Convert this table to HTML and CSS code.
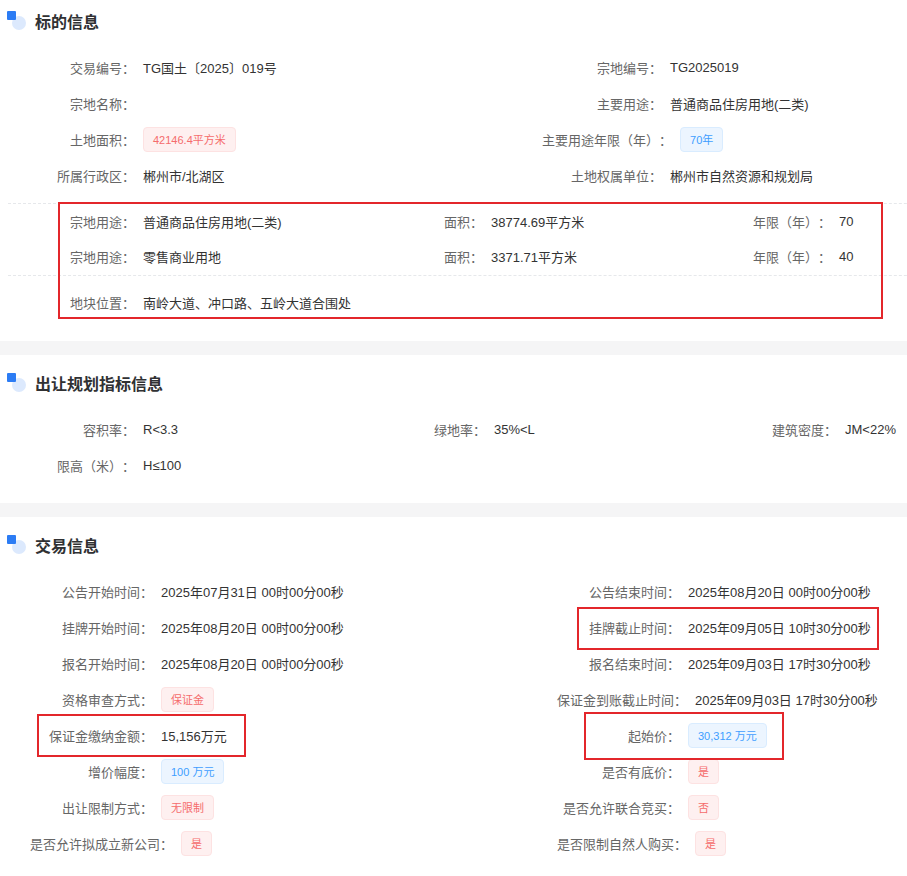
FILE: index.html
```html
<!DOCTYPE html>
<html lang="zh-CN">
<head>
  <meta charset="UTF-8" />
  <meta name="viewport" content="width=device-width, initial-scale=1.0"/>
  <title>宗地详情</title>
  <link rel="stylesheet" href="styles.css">
</head>
<body>

  <div class="page">

    <section class="section">
      <h3 class="section-title">
        <svg class="title-icon" width="20" height="20" viewBox="0 0 20 20"><circle cx="12" cy="12" r="7" fill="#dce9fd"/><rect x="0" y="0" width="9" height="9" rx="1" fill="#2c7cf4"/></svg>
        标的信息
      </h3>
      <div class="grid grid-2">
        <div class="item"><span class="label">交易编号：</span><span class="value">TG国土〔2025〕019号</span></div>
        <div class="item"><span class="label">宗地编号：</span><span class="value">TG2025019</span></div>
        <div class="item"><span class="label">宗地名称：</span><span class="value"></span></div>
        <div class="item"><span class="label">主要用途：</span><span class="value">普通商品住房用地(二类)</span></div>
        <div class="item"><span class="label">土地面积：</span><span class="tag tag-red">42146.4平方米</span></div>
        <div class="item"><span class="label">主要用途年限（年）：</span><span class="tag tag-blue">70年</span></div>
        <div class="item"><span class="label">所属行政区：</span><span class="value">郴州市/北湖区</span></div>
        <div class="item"><span class="label">土地权属单位：</span><span class="value">郴州市自然资源和规划局</span></div>
      </div>

      <div class="land">
        <div class="grid grid-land">
          <div class="item"><span class="label">宗地用途：</span><span class="value">普通商品住房用地(二类)</span></div>
          <div class="item"><span class="label">面积：</span><span class="value">38774.69平方米</span></div>
          <div class="item"><span class="label">年限（年）：</span><span class="value">70</span></div>
          <div class="item"><span class="label">宗地用途：</span><span class="value">零售商业用地</span></div>
          <div class="item"><span class="label">面积：</span><span class="value">3371.71平方米</span></div>
          <div class="item"><span class="label">年限（年）：</span><span class="value">40</span></div>
        </div>
        <div class="land-loc">
          <div class="item"><span class="label">地块位置：</span><span class="value">南岭大道、冲口路、五岭大道合围处</span></div>
        </div>
      </div>
    </section>

    <div class="band"></div>

    <section class="section">
      <h3 class="section-title">
        <svg class="title-icon" width="20" height="20" viewBox="0 0 20 20"><circle cx="12" cy="12" r="7" fill="#dce9fd"/><rect x="0" y="0" width="9" height="9" rx="1" fill="#2c7cf4"/></svg>
        出让规划指标信息
      </h3>
      <div class="grid grid-3">
        <div class="item"><span class="label">容积率：</span><span class="value">R&lt;3.3</span></div>
        <div class="item"><span class="label">绿地率：</span><span class="value">35%&lt;L</span></div>
        <div class="item"><span class="label">建筑密度：</span><span class="value">JM&lt;22%</span></div>
        <div class="item"><span class="label">限高（米）：</span><span class="value">H≤100</span></div>
      </div>
    </section>

    <div class="band"></div>

    <section class="section trade">
      <h3 class="section-title">
        <svg class="title-icon" width="20" height="20" viewBox="0 0 20 20"><circle cx="12" cy="12" r="7" fill="#dce9fd"/><rect x="0" y="0" width="9" height="9" rx="1" fill="#2c7cf4"/></svg>
        交易信息
      </h3>
      <div class="grid grid-2">
        <div class="item"><span class="label">公告开始时间：</span><span class="value">2025年07月31日 00时00分00秒</span></div>
        <div class="item"><span class="label">公告结束时间：</span><span class="value">2025年08月20日 00时00分00秒</span></div>
        <div class="item"><span class="label">挂牌开始时间：</span><span class="value">2025年08月20日 00时00分00秒</span></div>
        <div class="item"><span class="label">挂牌截止时间：</span><span class="value">2025年09月05日 10时30分00秒</span></div>
        <div class="item"><span class="label">报名开始时间：</span><span class="value">2025年08月20日 00时00分00秒</span></div>
        <div class="item"><span class="label">报名结束时间：</span><span class="value">2025年09月03日 17时30分00秒</span></div>
        <div class="item"><span class="label">资格审查方式：</span><span class="tag tag-red">保证金</span></div>
        <div class="item"><span class="label">保证金到账截止时间：</span><span class="value">2025年09月03日 17时30分00秒</span></div>
        <div class="item"><span class="label">保证金缴纳金额：</span><span class="value">15,156万元</span></div>
        <div class="item"><span class="label">起始价：</span><span class="tag tag-blue">30,312 万元</span></div>
        <div class="item"><span class="label">增价幅度：</span><span class="tag tag-blue">100 万元</span></div>
        <div class="item"><span class="label">是否有底价：</span><span class="tag tag-red">是</span></div>
        <div class="item"><span class="label">出让限制方式：</span><span class="tag tag-red">无限制</span></div>
        <div class="item"><span class="label">是否允许联合竞买：</span><span class="tag tag-red">否</span></div>
        <div class="item"><span class="label">是否允许拟成立新公司：</span><span class="tag tag-red">是</span></div>
        <div class="item"><span class="label">是否限制自然人购买：</span><span class="tag tag-red">是</span></div>
      </div>
    </section>

    <!-- red annotation frames drawn over the page -->
    <div class="mark mark-land"></div>
    <div class="mark mark-deadline"></div>
    <div class="mark mark-deposit"></div>
    <div class="mark mark-price"></div>

  </div>

</body>
</html>
```

FILE: styles.css
```css
* {
  margin: 0;
  box-sizing: border-box;
}

html, body {
  overflow: hidden;
}

body {
  font-family: "Liberation Sans", "Noto Sans CJK SC", sans-serif;
  font-size: 13px;
  color: #333;
  background: #fff;
  height: 876px;
  text-spacing-trim: space-all;
}

.page {
  position: relative;
  width: 1062px;
}

.section {
  padding: 8px 0 20px 8px;
}

.section:first-child {
  padding-top: 1px;
  padding-bottom: 21px;
}

.section-title {
  display: flex;
  align-items: center;
  height: 40px;
  margin-bottom: 8px;
  font-size: 16px;
  font-weight: bold;
  color: #303133;
}

.title-icon {
  margin-left: -1px;
  margin-right: 8px;
  flex-shrink: 0;
}

.band {
  height: 14px;
  background: #f5f5f6;
}

.grid {
  display: grid;
}

.grid-2 {
  grid-template-columns: 527px 527px;
}

.grid-3 {
  grid-template-columns: repeat(3, 351px);
}

.grid-land {
  grid-template-columns: repeat(3, 348px);
}

.item {
  display: flex;
  align-items: center;
  height: 36px;
  padding-left: 7px;
}

.label {
  min-width: 120px;
  margin-right: 8px;
  text-align: right;
  color: #666;
  white-space: nowrap;
}

.value {
  white-space: nowrap;
  color: #333;
}

.trade .item {
  padding-left: 22px;
}

.trade .label {
  min-width: 123px;
}

.land {
  margin-top: 10px;
  border-top: 1px dashed #e6e8eb;
}

.land .item {
  height: 35px;
}

.land-loc {
  margin-top: 1px;
  border-top: 1px dashed #e6e8eb;
  padding-top: 9px;
}

.tag {
  display: inline-flex;
  align-items: center;
  height: 25px;
  padding: 0 9px;
  font-size: 11px;
  border: 1px solid;
  border-radius: 4px;
  white-space: nowrap;
}

.tag-red {
  background: #fef0f0;
  border-color: #fde2e2;
  color: #f56c6c;
}

.tag-blue {
  background: #ecf5ff;
  border-color: #d9ecff;
  color: #409eff;
}

.mark {
  position: absolute;
  border: 2px solid #e3262b;
}

.mark-land {
  left: 58px;
  top: 202px;
  width: 825px;
  height: 117px;
}

.mark-deadline {
  left: 577px;
  top: 607px;
  width: 302px;
  height: 43px;
}

.mark-deposit {
  left: 37px;
  top: 714px;
  width: 209px;
  height: 43px;
}

.mark-price {
  left: 584px;
  top: 712px;
  width: 200px;
  height: 48px;
}
```
